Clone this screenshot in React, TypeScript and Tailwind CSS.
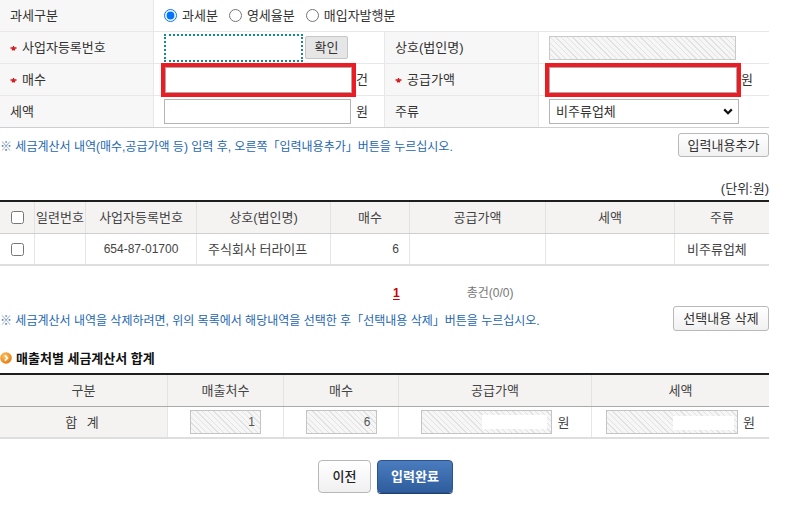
import type { ReactNode } from "react";

const hatch =
  "bg-[repeating-linear-gradient(45deg,#f6f6f6_0px,#f6f6f6_3px,#e2e2e2_3px,#e2e2e2_4px)]";

function Star() {
  return (
    <svg width="7" height="6" viewBox="0 0 7 6" className="mr-[5px] shrink-0">
      <path d="M0.5 3H6.5M3.5 1V5.2M2 5.2L3.5 3.6L5 5.2" stroke="#d01818" strokeWidth="1.3" fill="none" />
    </svg>
  );
}

function Label({ children, req, className = "" }: { children: ReactNode; req?: boolean; className?: string }) {
  return (
    <div className={`flex items-center bg-[#f7f7f7] border-r border-[#e8e8e8] pl-[10px] text-[13px] text-[#333] ${className}`}>
      {req && <Star />}
      {children}
    </div>
  );
}

function GrayButton({ children, className = "" }: { children: ReactNode; className?: string }) {
  return (
    <button
      type="button"
      className={`flex items-center justify-center rounded-[3px] border border-[#b9b9b9] bg-[linear-gradient(#ffffff,#f1f1f1)] text-[13px] text-[#333] ${className}`}
    >
      {children}
    </button>
  );
}

function Radio({ label, checked }: { label: string; checked?: boolean }) {
  return (
    <label className="flex items-center gap-[5px]">
      <input type="radio" name="kind" defaultChecked={checked} className="m-0 h-[13px] w-[13px]" />
      <span>{label}</span>
    </label>
  );
}

function OrangeBullet() {
  return (
    <svg width="12" height="12" viewBox="0 0 12 12" className="shrink-0">
      <defs>
        <radialGradient id="ob" cx="40%" cy="35%" r="70%">
          <stop offset="0" stopColor="#ffc45e" />
          <stop offset="1" stopColor="#e4760c" />
        </radialGradient>
      </defs>
      <circle cx="6" cy="6" r="5.8" fill="url(#ob)" />
      <path d="M4.9 3.4 7.4 6 4.9 8.6" fill="none" stroke="#fff" strokeWidth="1.7" />
    </svg>
  );
}

const listCols = "grid grid-cols-[35px_51px_111px_134px_79px_136px_129px_94px]";
const sumCols = "grid grid-cols-[168px_116px_115px_193px_177px]";

export default function App() {
  return (
    <div className="w-[790px] min-h-[507px] bg-white font-['Liberation_Sans','Noto_Sans_CJK_KR',sans-serif] text-[13px] leading-none text-[#333]">
      <div className="w-[769px]">
        {/* input form */}
        <div className="flex h-[32px] border-b border-[#e8e8e8]">
          <Label className="w-[154px]">과세구분</Label>
          <div className="flex flex-1 items-center gap-[11px] pl-[10px]">
            <Radio label="과세분" checked />
            <Radio label="영세율분" />
            <Radio label="매입자발행분" />
          </div>
        </div>

        <div className="flex h-[32px] border-b border-[#e8e8e8]">
          <Label req className="w-[154px]">사업자등록번호</Label>
          <div className="flex w-[231px] items-center gap-[2px] border-r border-[#e8e8e8] pl-[10px]">
            <input className="h-[28px] w-[139px] border-2 border-dotted border-[#178a90] bg-white" />
            <button type="button" className="flex h-[23px] w-[43px] items-center justify-center rounded-[2px] border border-[#c6c6c6] bg-[#e6e6e6] text-[13px] text-[#333]">
              확인
            </button>
          </div>
          <Label className="w-[154px]">상호(법인명)</Label>
          <div className="flex flex-1 items-center pl-[10px]">
            <div className={`h-[24px] w-[187px] border border-[#c9c9c9] ${hatch}`} />
          </div>
        </div>

        <div className="flex h-[32px] border-b border-[#e8e8e8]">
          <Label req className="w-[154px]">매수</Label>
          <div className="flex w-[231px] items-center border-r border-[#e8e8e8] pl-[11px]">
            <input className="h-[26px] w-[187px] border border-[#aaaaaa] bg-white shadow-[0_0_0_4px_#ed1c24]" />
            <span className="ml-[4px]">건</span>
          </div>
          <Label req className="w-[154px]">공급가액</Label>
          <div className="flex flex-1 items-center pl-[10px]">
            <input className="h-[26px] w-[188px] border border-[#aaaaaa] bg-white shadow-[0_0_0_4px_#ed1c24]" />
            <span className="ml-[4px]">원</span>
          </div>
        </div>

        <div className="flex h-[32px] border-b border-[#cfcfcf]">
          <Label className="w-[154px]">세액</Label>
          <div className="flex w-[231px] items-center border-r border-[#e8e8e8] pl-[10px]">
            <input className="h-[25px] w-[187px] border border-[#b5b5b5] bg-white" />
            <span className="ml-[5px]">원</span>
          </div>
          <Label className="w-[154px]">주류</Label>
          <div className="flex flex-1 items-center pl-[10px]">
            <div className="flex h-[25px] w-[190px] items-center justify-between border border-[#b5b5b5] bg-white pl-[6px] pr-[5px]">
              <span>비주류업체</span>
              <svg width="10" height="7" viewBox="0 0 10 7">
                <path d="M1.2 1.4 5 5.2 8.8 1.4" fill="none" stroke="#111" strokeWidth="2.2" />
              </svg>
            </div>
          </div>
        </div>

        {/* add notice */}
        <div className="mt-[5px] flex h-[24px] items-center justify-between">
          <p className="pt-[3px] text-[12px] text-[#2467b0]">
            <span className="text-[#5a7fa8]">※</span> 세금계산서 내역(매수,공급가액 등) 입력 후, 오른쪽「입력내용추가」버튼을 누르십시오.
          </p>
          <GrayButton className="h-[24px] w-[91px]">입력내용추가</GrayButton>
        </div>

        <div className="mt-[23px] flex h-[16px] items-center justify-end text-[13px] text-[#333]">(단위:원)</div>

        {/* list table */}
        <div className="mt-[4px] border-t-2 border-[#1e1e1e]">
          <div className={`${listCols} h-[32px] border-b border-[#cfcfcf] bg-[#f4f3f1] text-[#444]`}>
            <div className="flex items-center justify-center border-r border-[#e2e2e2]">
              <input type="checkbox" className="m-0 h-[13px] w-[13px]" />
            </div>
            <div className="flex items-center justify-center border-r border-[#e2e2e2]">일련번호</div>
            <div className="flex items-center justify-center border-r border-[#e2e2e2]">사업자등록번호</div>
            <div className="flex items-center justify-center border-r border-[#e2e2e2]">상호(법인명)</div>
            <div className="flex items-center justify-center border-r border-[#e2e2e2]">매수</div>
            <div className="flex items-center justify-center border-r border-[#e2e2e2]">공급가액</div>
            <div className="flex items-center justify-center border-r border-[#e2e2e2]">세액</div>
            <div className="flex items-center justify-center">주류</div>
          </div>
          <div className={`${listCols} h-[32px] border-b-2 border-[#dedede] text-[#444]`}>
            <div className="flex items-center justify-center border-r border-[#e6e6e6]">
              <input type="checkbox" className="m-0 h-[13px] w-[13px]" />
            </div>
            <div className="border-r border-[#e6e6e6]" />
            <div className="flex items-center justify-center border-r border-[#e6e6e6] text-[12px]">654-87-01700</div>
            <div className="flex items-center border-r border-[#e6e6e6] pl-[11px]">주식회사 터라이프</div>
            <div className="flex items-center justify-end border-r border-[#e6e6e6] pr-[10px] text-[12px]">6</div>
            <div className="border-r border-[#e6e6e6]" />
            <div className="border-r border-[#e6e6e6]" />
            <div className="flex items-center pl-[12px]">비주류업체</div>
          </div>
        </div>

        {/* paging */}
        <div className="mt-[19px] flex h-[16px] items-center pl-[393px]">
          <span className="text-[12px] font-bold text-[#cc0000] underline underline-offset-2">1</span>
          <span className="ml-[67px] text-[12px] text-[#777]">총건(0/0)</span>
        </div>

        {/* delete notice */}
        <div className="mt-[5px] flex h-[25px] items-center justify-between">
          <p className="pt-[4px] text-[12px] text-[#2467b0]">
            <span className="text-[#5a7fa8]">※</span> 세금계산서 내역을 삭제하려면, 위의 목록에서 해당내역을 선택한 후「선택내용 삭제」버튼을 누르십시오.
          </p>
          <GrayButton className="h-[25px] w-[96px]">선택내용 삭제</GrayButton>
        </div>

        {/* summary */}
        <div className="mt-[19px] flex h-[16px] items-center gap-[4px]">
          <OrangeBullet />
          <h2 className="text-[13px] font-bold text-[#111]">매출처별 세금계산서 합계</h2>
        </div>

        <div className="mt-[7px] border-t-2 border-[#1e1e1e]">
          <div className={`${sumCols} h-[32px] border-b border-[#a9a9a9] bg-[#f4f3f1] text-[#444]`}>
            <div className="flex items-center justify-center border-r border-[#e2e2e2]">구분</div>
            <div className="flex items-center justify-center border-r border-[#e2e2e2]">매출처수</div>
            <div className="flex items-center justify-center border-r border-[#e2e2e2]">매수</div>
            <div className="flex items-center justify-center border-r border-[#e2e2e2]">공급가액</div>
            <div className="flex items-center justify-center">세액</div>
          </div>
          <div className={`${sumCols} h-[32px] border-b-2 border-[#dedede] text-[#444]`}>
            <div className="flex items-center justify-center border-r border-[#e6e6e6] bg-[#f4f3f1] tracking-[3px]">합 계</div>
            <div className="flex items-center justify-center border-r border-[#e6e6e6]">
              <div className={`flex h-[24px] w-[71px] items-center justify-end border border-[#c4c4c4] pr-[5px] text-[12px] text-[#555] ${hatch}`}>1</div>
            </div>
            <div className="flex items-center justify-center border-r border-[#e6e6e6]">
              <div className={`flex h-[24px] w-[71px] items-center justify-end border border-[#c4c4c4] pr-[5px] text-[12px] text-[#555] ${hatch}`}>6</div>
            </div>
            <div className="flex items-center justify-center gap-[6px] border-r border-[#e6e6e6]">
              <div className={`flex h-[24px] w-[131px] items-center justify-end border border-[#c4c4c4] pr-[4px] ${hatch}`}>
                <div className="h-[14px] w-[65px] bg-white" />
              </div>
              <span>원</span>
            </div>
            <div className="flex items-center justify-center gap-[5px]">
              <div className={`flex h-[24px] w-[132px] items-center justify-end border border-[#c4c4c4] pr-[3px] ${hatch}`}>
                <div className="mt-[2px] h-[14px] w-[61px] bg-white" />
              </div>
              <span>원</span>
            </div>
          </div>
        </div>

        {/* actions */}
        <div className="mt-[21px] flex justify-center gap-[6px] pl-[2px]">
          <button type="button" className="h-[33px] w-[53px] rounded-[4px] border border-[#b7b7b7] bg-[linear-gradient(#ffffff,#f0f0f0)] text-[13px] font-medium text-[#222]">
            이전
          </button>
          <button type="button" className="h-[33px] w-[76px] rounded-[4px] border border-[#2b5390] bg-[linear-gradient(#4a7cbe,#2f5d9e)] text-[13px] font-bold text-white shadow-[0_1px_0_#1f3f70]">
            입력완료
          </button>
        </div>
      </div>
    </div>
  );
}
